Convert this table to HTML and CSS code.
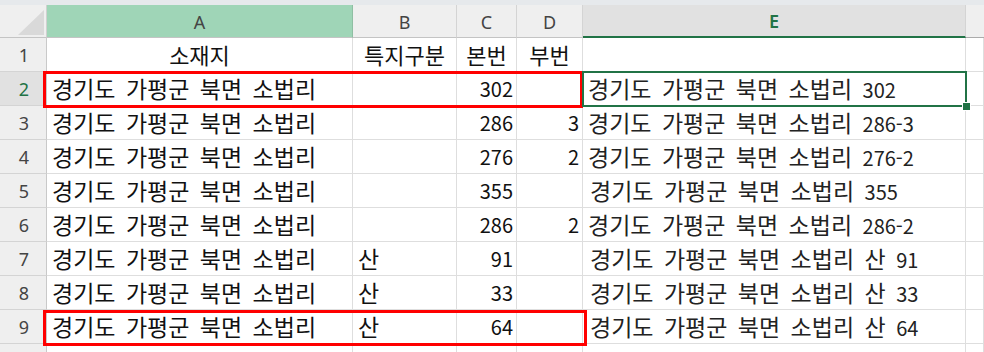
FILE: index.html
```html
<!DOCTYPE html>
<html lang="ko">
<head>
<meta charset="utf-8">
<link rel="stylesheet" href="styles.css">
</head>
<body>
<div class="topstrip"></div>
<div class="wrap">
  <div class="sheet">
    <div class="corner"><span class="tri"></span></div>
    <div class="ch ch-hover">A</div>
    <div class="ch">B</div>
    <div class="ch">C</div>
    <div class="ch">D</div>
    <div class="ch ch-sel">E</div>
    <div class="ch ch-last"></div>

    <div class="rh">1</div>
    <div class="cell c"><span>소재지</span></div>
    <div class="cell c"><span>특지구분</span></div>
    <div class="cell c"><span>본번</span></div>
    <div class="cell c"><span>부번</span></div>
    <div class="cell"></div>
    <div class="cell"></div>

    <div class="rh rh-sel">2</div>
    <div class="cell l"><span>경기도 가평군 북면 소법리</span></div>
    <div class="cell l"></div>
    <div class="cell r num"><span>302</span></div>
    <div class="cell r num"></div>
    <div class="cell l e"><span>경기도 가평군 북면 소법리 <span class="num">302</span></span></div>
    <div class="cell"></div>

    <div class="rh">3</div>
    <div class="cell l"><span>경기도 가평군 북면 소법리</span></div>
    <div class="cell l"></div>
    <div class="cell r num"><span>286</span></div>
    <div class="cell r num"><span>3</span></div>
    <div class="cell l e"><span>경기도 가평군 북면 소법리 <span class="num">286-3</span></span></div>
    <div class="cell"></div>

    <div class="rh">4</div>
    <div class="cell l"><span>경기도 가평군 북면 소법리</span></div>
    <div class="cell l"></div>
    <div class="cell r num"><span>276</span></div>
    <div class="cell r num"><span>2</span></div>
    <div class="cell l e"><span>경기도 가평군 북면 소법리 <span class="num">276-2</span></span></div>
    <div class="cell"></div>

    <div class="rh">5</div>
    <div class="cell l"><span>경기도 가평군 북면 소법리</span></div>
    <div class="cell l"></div>
    <div class="cell r num"><span>355</span></div>
    <div class="cell r num"></div>
    <div class="cell l e shift"><span>경기도 가평군 북면 소법리 <span class="num">355</span></span></div>
    <div class="cell"></div>

    <div class="rh">6</div>
    <div class="cell l"><span>경기도 가평군 북면 소법리</span></div>
    <div class="cell l"></div>
    <div class="cell r num"><span>286</span></div>
    <div class="cell r num"><span>2</span></div>
    <div class="cell l e"><span>경기도 가평군 북면 소법리 <span class="num">286-2</span></span></div>
    <div class="cell"></div>

    <div class="rh">7</div>
    <div class="cell l"><span>경기도 가평군 북면 소법리</span></div>
    <div class="cell l"><span>산</span></div>
    <div class="cell r num"><span>91</span></div>
    <div class="cell r num"></div>
    <div class="cell l e shift"><span>경기도 가평군 북면 소법리 산 <span class="num">91</span></span></div>
    <div class="cell"></div>

    <div class="rh">8</div>
    <div class="cell l"><span>경기도 가평군 북면 소법리</span></div>
    <div class="cell l"><span>산</span></div>
    <div class="cell r num"><span>33</span></div>
    <div class="cell r num"></div>
    <div class="cell l e shift"><span>경기도 가평군 북면 소법리 산 <span class="num">33</span></span></div>
    <div class="cell"></div>

    <div class="rh">9</div>
    <div class="cell l"><span>경기도 가평군 북면 소법리</span></div>
    <div class="cell l"><span>산</span></div>
    <div class="cell r num"><span>64</span></div>
    <div class="cell r num"></div>
    <div class="cell l e shift"><span>경기도 가평군 북면 소법리 산 <span class="num">64</span></span></div>
    <div class="cell"></div>

    <div class="rh"></div>
    <div class="cell"></div>
    <div class="cell"></div>
    <div class="cell"></div>
    <div class="cell"></div>
    <div class="cell"></div>
    <div class="cell"></div>
  </div>

  <div class="mark mark-r2"></div>
  <div class="mark mark-r9"></div>
  <div class="selbox"><span class="handle"></span></div>
</div>
</body>
</html>
```

FILE: styles.css
```css
* { box-sizing: border-box; }
html, body { margin: 0; padding: 0; background: #ffffff; }
body { width: 984px; height: 352px; overflow: hidden; }

.topstrip { height: 5px; background: #e6e9ec; }

.wrap { position: relative; }

.sheet {
  display: grid;
  grid-template-columns: 47px 306px 104px 60px 66px 383px 18px;
  grid-template-rows: 33px repeat(10, 34px);
  font-family: "Noto Sans CJK KR", "Noto Sans", sans-serif;
  font-size: 23px;
  color: #111;
}

.corner {
  background: #efefef;
  border-right: 1px solid #d0d0d0;
  border-bottom: 1px solid #c4c4c4;
  display: flex;
  justify-content: flex-end;
  align-items: flex-end;
  padding: 0 2px 2px 0;
}
.tri {
  width: 26px;
  height: 25px;
  background: #d9d9d9;
  clip-path: polygon(100% 0, 100% 100%, 0 100%);
}

.ch {
  background: #efefef;
  border-right: 1px solid #d4d4d4;
  border-bottom: 1px solid #c4c4c4;
  display: flex;
  align-items: center;
  justify-content: center;
  font-family: "Noto Sans", sans-serif;
  font-size: 18px;
  color: #444;
  padding-top: 1px;
}
.ch-hover { background: #9fd5b7; border-right-color: #8fbfa3; }
.ch-sel {
  background: #e1e1e1;
  color: #217346;
  font-weight: 600;
  border-bottom: 2px solid #217346;
}
.ch-last { border-right: none; border-bottom-color: #ababab; }

.rh {
  background: #efefef;
  border-right: 1px solid #c9c9c9;
  border-bottom: 1px solid #d4d4d4;
  display: flex;
  align-items: center;
  justify-content: center;
  font-family: "Noto Sans", sans-serif;
  font-size: 18px;
  color: #444;
  padding-left: 2px;
}
.rh-sel { background: #e1e1e1; color: #217346; }

.cell {
  border-right: 1px solid #dedede;
  border-bottom: 1px solid #dedede;
  display: flex;
  align-items: center;
  white-space: nowrap;
  overflow: visible;
  word-spacing: 4px;
  padding-bottom: 1px;
}
.cell.l { justify-content: flex-start; padding-left: 5px; }
.cell.r { justify-content: flex-end; padding-right: 3px; }
.cell.c { justify-content: center; word-spacing: 0; font-size: 22px; }
.cell.e { color: #222; padding-left: 5px; }
.cell.e.shift { padding-left: 7px; }
.num { font-size: 20px; word-spacing: 0; }

.mark {
  position: absolute;
  border: 3px solid #ff0000;
  pointer-events: none;
}
.mark-r2 { left: 43px; top: 66px; width: 540px; height: 37px; }
.mark-r9 { left: 43px; top: 305px; width: 544px; height: 36px; }

.selbox {
  position: absolute;
  left: 582px;
  top: 66px;
  width: 385px;
  height: 36px;
  border: 2px solid #217346;
}
.handle {
  position: absolute;
  right: -5px;
  bottom: -5px;
  width: 7px;
  height: 7px;
  background: #217346;
  outline: 1px solid #ffffff;
}
```
